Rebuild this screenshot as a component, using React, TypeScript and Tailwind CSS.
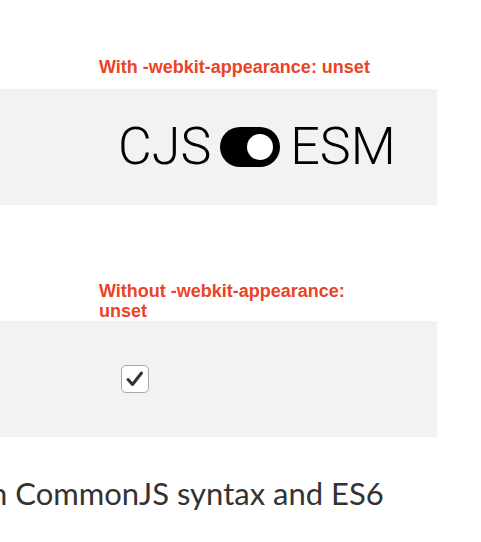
export default function App() {
  const label =
    "ml-[99px] w-[280px] text-[18px] leading-[20px] font-bold text-[#ea4426] [font-family:'Liberation_Sans',Arial,sans-serif]";
  return (
    <div className="w-[481px] h-[542px] overflow-hidden bg-white">
      <div className="pt-[57px]">
        <div className={label}>With -webkit-appearance: unset</div>
        <div className="mt-[12px] h-[116px] w-[437px] bg-[#f2f2f2] flex items-center pl-[118px]">
          <div className="flex items-center [font-family:Roboto,sans-serif] font-light text-[52px] leading-none text-black">
            <span>CJS</span>
            <span className="relative ml-[9px] mr-[10px] h-[40px] w-[60px] rounded-full bg-black">
              <span className="absolute right-[7px] top-[7px] h-[26px] w-[26px] rounded-full bg-white" />
            </span>
            <span>ESM</span>
          </div>
        </div>
      </div>
      <div className="pt-[76px]">
        <div className={label}>Without -webkit-appearance: unset</div>
        <div className="h-[116px] w-[437px] bg-[#f2f2f2] flex items-center pl-[121px]">
          <span className="flex h-[28px] w-[28px] items-center justify-center rounded-[5px] border border-[#a8a8a8] bg-white">
            <svg width="20" height="18" viewBox="0 0 20 18">
              <path d="M3 9.5 L7.5 14.5 L16.5 3" fill="none" stroke="#333" strokeWidth="3" strokeLinecap="round" strokeLinejoin="round" />
            </svg>
          </span>
        </div>
      </div>
      <p className="mt-[36px] ml-[-10px] whitespace-nowrap text-[31px] leading-[40px] text-[#333] [font-family:Lato,sans-serif]">
        n CommonJS syntax and ES6
      </p>
    </div>
  );
}
